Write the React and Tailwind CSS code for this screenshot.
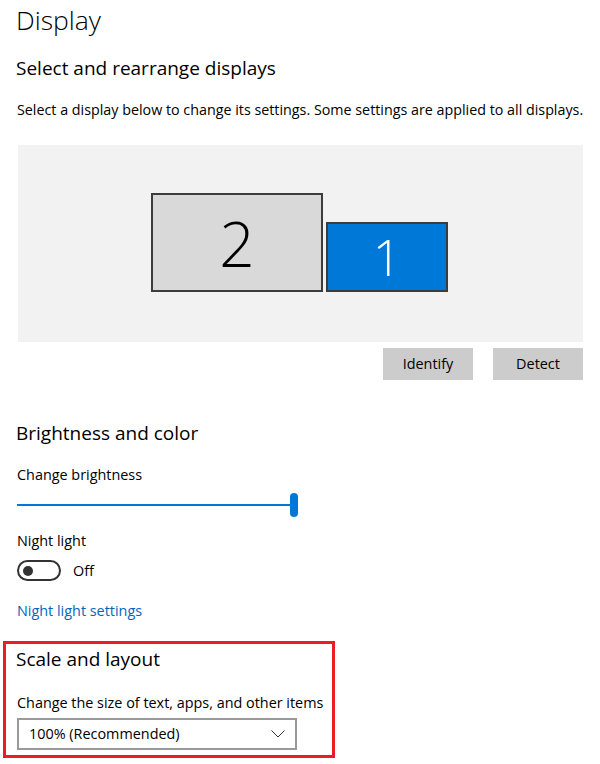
import React from 'react'

function Monitor({ n, className, textClass }) {
  return (
    <div className={`flex items-center justify-center border-2 border-[#3c3c3c] ${className}`}>
      <span className={`font-light leading-none ${textClass}`}>{n}</span>
    </div>
  )
}

export default function App() {
  return (
    <div className="w-[600px] h-[764px] bg-white text-black overflow-hidden" style={{ fontFamily: '"Segoe UI", "Open Sans", sans-serif' }}>
      <div className="pl-4 pr-4">
        <h1 className="text-[26.5px] font-light leading-none pt-[7px] h-[40px]">Display</h1>
        <h2 className="text-[19px] leading-none mt-[19px]">Select and rearrange displays</h2>
        <p className="text-[14.3px] mt-[25px] ml-[1px] leading-none whitespace-nowrap">
          Select a display below to change its settings. Some settings are applied to all displays.
        </p>

        <div className="ml-[2px] mt-[28px] w-[565px] h-[197px] bg-[#f2f2f2] flex items-start justify-center pt-[48px] pr-[4px]">
          <div className="flex items-end gap-[3px] ml-[2px]">
            <Monitor n="2" className="w-[172px] h-[99px] bg-[#d9d9d9]" textClass="text-[62px] text-black" />
            <Monitor n="1" className="w-[122px] h-[70px] bg-[#0078d7]" textClass="text-[50px] text-white" />
          </div>
        </div>

        <div className="flex justify-end gap-[20px] mt-[6px] w-[567px]">
          <button className="w-[90px] h-[32px] bg-[#cccccc] text-[14.4px]">Identify</button>
          <button className="w-[90px] h-[32px] bg-[#cccccc] text-[14.4px]">Detect</button>
        </div>

        <h2 className="text-[19px] leading-none mt-[44px]">Brightness and color</h2>
        <p className="text-[14.4px] leading-none mt-[25px] ml-[1px]">Change brightness</p>
        <div className="relative mt-[10px] ml-[1px] w-[280px] h-[24px] flex items-center">
          <div className="w-[275px] h-[2px] bg-[#0078d7]"></div>
          <div className="absolute left-[273px] top-0 w-[8px] h-[24px] rounded-full bg-[#0078d7]"></div>
        </div>

        <p className="text-[14.4px] leading-none mt-[17px] ml-[1px]">Night light</p>
        <div className="flex items-center mt-[12px] ml-[1px]">
          <div className="w-[44px] h-[21px] rounded-full border-2 border-[#333] flex items-center pl-[4px]">
            <div className="w-[10px] h-[10px] rounded-full bg-[#333]"></div>
          </div>
          <span className="text-[14.4px] ml-[12px]">Off</span>
        </div>

        <a className="block text-[14.4px] leading-none mt-[22px] ml-[1px] text-[#0067c0]">Night light settings</a>
      </div>

      <div className="ml-[3px] mt-[23px] w-[332px] h-[117px] border-[3px] border-[#ed1c24] pl-[10px] pt-[6px]">
        <h2 className="text-[19px] leading-none">Scale and layout</h2>
        <p className="text-[14.4px] leading-none mt-[27px] ml-[1px]">Change the size of text, apps, and other items</p>
        <div className="mt-[7px] ml-[1px] w-[280px] h-[32px] border-2 border-[#999] flex items-center justify-between pl-[10px] pr-[10px]">
          <span className="text-[14.4px]">100% (Recommended)</span>
          <svg width="14" height="8" viewBox="0 0 14 8" fill="none" stroke="#333" strokeWidth="1">
            <path d="M0.5 0.5 L7 7 L13.5 0.5" />
          </svg>
        </div>
      </div>
    </div>
  )
}
